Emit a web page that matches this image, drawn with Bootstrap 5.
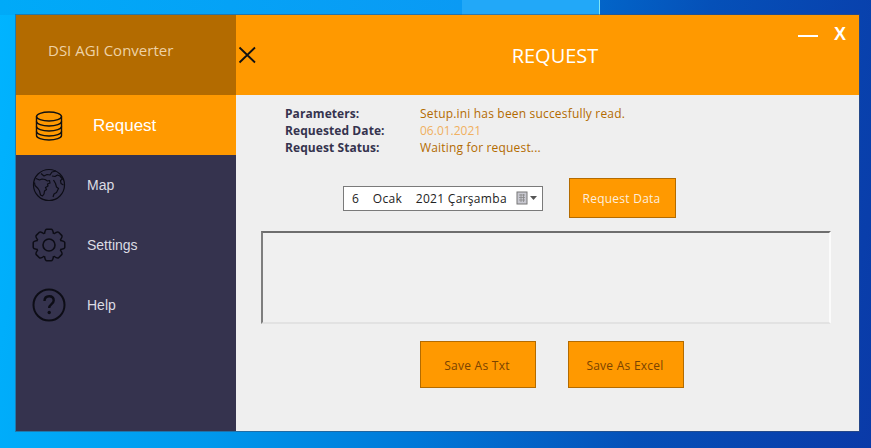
<!doctype html>
<html lang="tr"><head><meta charset="utf-8"><title>DSI AGI Converter</title>
<link href="https://cdn.jsdelivr.net/npm/bootstrap@5.3.0/dist/css/bootstrap.min.css" rel="stylesheet">
<style>
html,body{height:448px;overflow:hidden}
body{background:linear-gradient(100deg,#00b4ff 0%,#0098ec 30%,#0078d8 52%,#0550b8 75%,#0a3aa8 100%);font-family:"Open Sans","Liberation Sans",sans-serif;padding:15px 12px 17px 16px;position:relative}
.pane-a{position:absolute;left:462px;top:0;width:138px;height:15px;background:#22a8f8;border-right:1px solid #7fe6f5}
.pane-b{position:absolute;left:0;top:0;width:462px;height:15px;background:linear-gradient(90deg,#00aaf8,#0a9af4)}
.win{width:843px;height:416px;box-shadow:0 0 0 1px rgba(60,80,110,.55);position:relative}
.side{width:220px;background:#35334e}
.brand{height:80px;background:#b36b00;color:#eed2a6;font-size:15px;padding-left:32px;padding-top:25px;line-height:20px}
.item{height:60px;color:#dcdce4;font-family:"Liberation Sans",sans-serif;font-size:14px;padding-left:16px}
.item svg{width:34px;height:34px;flex:none}
.item span{margin-left:21px;margin-top:1px}
.item.on{background:#ff9900;color:#fff;font-size:17px}
.item.on svg{margin-top:2px}
.item.on span{margin-left:27px;margin-top:2px}
.head{height:80px;background:#ff9900;color:#fff}
.burger{width:22px;height:22px;margin-top:29px;flex:none}
.ttl{font-size:20px;line-height:27px;margin-top:27px;margin-left:237px;width:120px}
.winbtns{margin-left:auto;padding:7px 13px 0 0;gap:16px}
.dash{width:20px;height:2px;background:#fff;margin-top:13px}
.xb{font-family:"Liberation Sans",sans-serif;font-weight:700;font-size:18px;line-height:24px}
.body-zone{background:#efefef;padding:10px 28px 0 25px}
.info{padding-left:24px;font-size:12px;line-height:17px;color:#35334e}
.info b{width:135px;display:inline-block;font-weight:700;font-size:12px;letter-spacing:.08px}
.val{color:#b36b00;letter-spacing:.18px}
.val2{color:#f0b060}
.tools{margin-top:22px;padding-left:82px;gap:26px;align-items:center}
.datep{width:200px;height:25px;background:#fff;border:1px solid #7a7a7a;font-size:12px;letter-spacing:.3px;color:#222;padding-left:8px;white-space:pre;line-height:23px}
.datep svg{margin-left:9px;flex:none}
.oa{background:#ff9900;border:1px solid #b36b00;border-radius:0;font-size:12px;letter-spacing:.25px;padding:1px 2px 0 0}
.oa:hover{background:#ff9900}
.reqb{width:107px;height:40px;color:#fdeedd}
.outbox{height:93px;margin-top:13px;background:#f0f0f0;border-top:2px solid #6e6e6e;border-left:2px solid #7e7e7e;border-right:2px solid #fbfbfb;border-bottom:2px solid #e2e2e2}
.saves{margin-top:17px;padding-left:159px;gap:32px}
.saveb{width:116px;height:47px;color:#7a4300;padding-top:3px}
.saveb:hover{color:#7a4300}
</style></head><body>
<div class="pane-b"></div><div class="pane-a"></div>
<div class="win d-flex">
 <nav class="side d-flex flex-column flex-shrink-0">
  <div class="brand">DSI AGI Converter</div>
  <div class="item on d-flex align-items-center">
   <svg viewBox="0 0 34 34" fill="none" stroke="#111" stroke-width="1.400"><ellipse cx="17" cy="7.500" rx="12.500" ry="4.500"/><path d="M4.500 7.500v19c0 2.500 5.600 4.500 12.500 4.500s12.500-2 12.500-4.500v-19"/><path d="M4.500 12.500c0 2.500 5.600 4.500 12.500 4.500s12.500-2 12.500-4.500M4.500 17.500c0 2.500 5.600 4.500 12.500 4.500s12.500-2 12.500-4.500M4.500 22.500c0 2.500 5.600 4.500 12.500 4.500s12.500-2 12.500-4.500"/></svg>
   <span>Request</span></div>
  <div class="item d-flex align-items-center">
   <svg viewBox="0 0 34 34" fill="none" stroke="#0d0d16" stroke-width="1.200" stroke-linejoin="round"><circle cx="17" cy="17" r="15.500"/><path d="M4 10.500l3.500 1.500 2.500-1 3 .5 2.500 1.500 2-.5.500 2.500-2.500 1 .5 2-2.500 1.500 1 2-2 1.500-.5 3-1.500 2-2-1-1-4-1.500-2.500-3-3-.5-3"/><path d="M9 5.500l3 2.500 3-1.500 3 .5 2-3 4-1"/><path d="M20 8l3 .5 2.500-1.500 2.500 1 2.500 3-2 1.500.5 3 2.500 1.500"/><path d="M21.500 12l2 3.500 1 3.500 2 1.500-2 4-2.500 1.500-1 3"/></svg>
   <span>Map</span></div>
  <div class="item d-flex align-items-center">
   <svg viewBox="-17 -17 34 34" fill="none" stroke="#0d0d16" stroke-width="1.500" stroke-linejoin="round"><defs><path id="gt" d="M-4.500-11.200C-4.300-12.500-3.900-15.800-2.200-15.800H2.200C3.900-15.800 4.300-12.500 4.500-11.200"/></defs><use href="#gt"/><use href="#gt" transform="rotate(45)"/><use href="#gt" transform="rotate(90)"/><use href="#gt" transform="rotate(135)"/><use href="#gt" transform="rotate(180)"/><use href="#gt" transform="rotate(225)"/><use href="#gt" transform="rotate(270)"/><use href="#gt" transform="rotate(315)"/><circle r="6" stroke-width="1.600"/></svg>
   <span>Settings</span></div>
  <div class="item d-flex align-items-center">
   <svg viewBox="0 0 34 34" fill="none" stroke="#0d0d16" stroke-width="2"><circle cx="17" cy="17" r="15.500"/><path d="M12.500 13c0-3 2-4.800 4.700-4.800s4.500 1.800 4.500 4.300c0 3.700-4.500 3.700-4.500 7.500" stroke-width="2.400"/><circle cx="17.200" cy="24.500" r="1.700" fill="#0d0d16" stroke="none"/></svg>
   <span>Help</span></div>
  <div class="flex-grow-1"></div>
 </nav>
 <main class="flex-grow-1 d-flex flex-column">
  <header class="head d-flex">
   <svg class="burger" viewBox="0 0 22 22" fill="none" stroke="#111" stroke-width="1.800"><path d="M3.500 3.500l15.500 15M19 3.500L3.500 18.500"/></svg>
   <div class="ttl text-center">REQUEST</div>
   <div class="winbtns d-flex"><div class="dash"></div><div class="xb">X</div></div>
  </header>
  <section class="body-zone flex-grow-1">
   <div class="info">
    <div><b>Parameters:</b><span class="val">Setup.ini has been succesfully read.</span></div>
    <div><b>Requested Date:</b><span class="val2">06.01.2021</span></div>
    <div><b>Request Status:</b><span class="val">Waiting for request...</span></div>
   </div>
   <div class="tools d-flex">
    <div class="datep d-flex align-items-center"><span>6    Ocak    2021 Çarşamba</span>
     <svg width="26" height="14" viewBox="0 0 26 14"><rect x="1" y="1" width="10" height="12" fill="#c8c8d0" stroke="#777"/><path d="M3 4h6M3 6.500h6M3 9h6M5 3v8M7.500 3v8" stroke="#888" stroke-width=".8"/><path d="M14 5h7l-3.500 4z" fill="#555"/></svg></div>
    <button class="btn oa reqb" type="button">Request Data</button>
   </div>
   <div class="outbox"></div>
   <div class="saves d-flex">
    <button class="btn oa saveb" type="button">Save As Txt</button>
    <button class="btn oa saveb" type="button">Save As Excel</button>
   </div>
  </section>
 </main>
</div>
</body></html>
